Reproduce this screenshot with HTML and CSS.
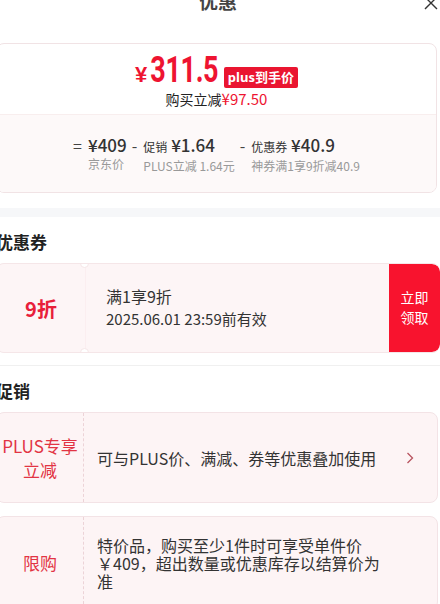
FILE: index.html
```html
<!DOCTYPE html>
<html>
<head>
<meta charset="utf-8">
<title>优惠</title>
<link rel="stylesheet" href="styles.css">
</head>
<body>

<div class="page">
  <div class="header">
    <span></span>
    <h1 class="title">优惠</h1>
    <span class="close">
      <svg width="14" height="14" viewBox="0 0 14 14"><path d="M1 1 L13 13 M13 1 L1 13" stroke="#333" stroke-width="1.4" fill="none"/></svg>
    </span>
  </div>

  <div class="price-card">
    <div class="price-main">
      <div class="price-row">
        <span class="yen">¥</span><span class="amount">311.5</span><span class="badge">plus到手价</span>
      </div>
      <div class="price-save">购买立减<em>¥97.50</em></div>
    </div>
    <div class="breakdown">
      <div class="calc-item">
        <span class="op">=</span>
        <div class="calc-body">
          <div class="calc-value">¥409</div>
          <div class="calc-label">京东价</div>
        </div>
      </div>
      <div class="calc-item">
        <span class="op">-</span>
        <div class="calc-body">
          <div class="calc-value"><small>促销</small> ¥1.64</div>
          <div class="calc-label">PLUS立减 1.64元</div>
        </div>
      </div>
      <div class="calc-item">
        <span class="op">-</span>
        <div class="calc-body">
          <div class="calc-value"><small>优惠券</small> ¥40.9</div>
          <div class="calc-label">神券满1享9折减40.9</div>
        </div>
      </div>
    </div>
  </div>

  <div class="band"></div>

  <h2 class="section-title">优惠券</h2>
  <div class="coupon">
    <div class="coupon-left">9折</div>
    <div class="coupon-info">
      <div class="coupon-name">满1享9折</div>
      <div class="coupon-date">2025.06.01 23:59前有效</div>
    </div>
    <div class="coupon-btn">立即<br>领取</div>
  </div>

  <div class="rule"></div>

  <h2 class="section-title">促销</h2>
  <div class="promo">
    <div class="promo-tag">PLUS专享<br>立减</div>
    <div class="promo-text">可与PLUS价、满减、券等优惠叠加使用</div>
    <div class="promo-arrow">
      <svg width="8" height="12" viewBox="0 0 8 12"><path d="M1.5 1 L6.5 6 L1.5 11" stroke="#b8535f" stroke-width="1.3" fill="none"/></svg>
    </div>
  </div>
  <div class="promo">
    <div class="promo-tag">限购</div>
    <div class="promo-text">特价品，购买至少1件时可享受单件价￥409，超出数量或优惠库存以结算价为准</div>
    <div class="promo-arrow"></div>
  </div>
</div>

</body>
</html>
```

FILE: styles.css
```css
body {
  margin: 0;
  background-color: white;
  font-family: "Noto Sans CJK SC", "Noto Sans", sans-serif;
  color: #333;
  overflow: hidden;
}

.page {
  width: 444px;
  margin-left: -4px;
}

.header {
  display: grid;
  grid-template-columns: 1fr auto 1fr;
  align-items: center;
  align-content: start;
  margin-top: -11px;
  height: 54px;
}

.title {
  margin: 0;
  font-size: 19px;
  line-height: 24px;
  font-weight: bold;
  color: #444;
}

.close {
  justify-self: end;
  margin-right: 2px;
  margin-top: 4px;
  display: flex;
}

.price-card {
  margin-right: 3px;
  border: 1px solid #f1e3e5;
  border-radius: 8px;
  overflow: hidden;
}

.price-main {
  height: 70px;
  padding-top: 8px;
  box-sizing: border-box;
  text-align: center;
}

.price-row {
  display: flex;
  justify-content: center;
  align-items: baseline;
  height: 36px;
  color: #ee1431;
}

.yen {
  font-family: "Liberation Sans", sans-serif;
  font-size: 22px;
  font-weight: bold;
  margin-right: 3px;
}

.amount {
  display: inline-block;
  font-family: "Roboto", sans-serif;
  font-size: 36px;
  line-height: 36px;
  font-weight: bold;
  letter-spacing: -0.5px;
  transform: scaleX(0.75);
  margin: 0 -11px;
}

.badge {
  margin-left: 5px;
  background-color: #ea1530;
  color: white;
  font-family: "Noto Sans", "Noto Sans CJK SC", sans-serif;
  font-size: 13px;
  font-weight: bold;
  line-height: 21px;
  padding: 0 4px;
  border-radius: 2px;
}

.price-save {
  font-size: 14px;
  line-height: 22px;
  color: #222;
}

.price-save em {
  font-style: normal;
  font-size: 15px;
  color: #ee1431;
}

.breakdown {
  height: 78px;
  box-sizing: border-box;
  padding-top: 19px;
  background-color: #fdf9f9;
  border-top: 1px solid #f8eeee;
  display: flex;
  justify-content: center;
  gap: 5px;
}

.calc-item {
  display: flex;
  align-items: flex-start;
}

.op {
  font-size: 16px;
  line-height: 22px;
  color: #444;
  margin-right: 6px;
}

.calc-value {
  font-size: 17px;
  line-height: 22px;
  font-weight: 500;
  color: #333;
  white-space: nowrap;
}

.calc-value small {
  font-size: 12px;
  font-weight: normal;
}

.calc-label {
  font-size: 12px;
  line-height: 16px;
  color: #999;
  white-space: nowrap;
}

.band {
  margin-top: 15px;
  height: 9px;
  background-color: #f6f7f9;
}

.section-title {
  margin: 0;
  padding: 13px 0 9px 0;
  font-size: 17px;
  line-height: 24px;
  font-weight: bold;
  color: #222;
}

.coupon {
  display: grid;
  grid-template-columns: 89px 1fr 51px;
  height: 90px;
  box-sizing: border-box;
  border: 1px solid #f5e6e8;
  border-right: none;
  border-radius: 8px;
  background-color: #fdf5f6;
  overflow: hidden;
}

.coupon-left {
  position: relative;
  display: flex;
  align-items: center;
  justify-content: center;
  font-size: 20px;
  font-weight: bold;
  color: #e8203a;
  border-right: 1px solid #fbeef0;
}

.coupon-left::before,
.coupon-left::after {
  content: "";
  position: absolute;
  right: -4px;
  width: 7px;
  height: 7px;
  border-radius: 50%;
  background-color: white;
  border: 1px solid #f5e6e8;
}

.coupon-left::before {
  top: -5px;
}

.coupon-left::after {
  bottom: -5px;
}

.coupon-info {
  display: flex;
  flex-direction: column;
  justify-content: center;
  padding-left: 20px;
  padding-bottom: 2px;
}

.coupon-name {
  font-size: 16px;
  line-height: 24px;
  color: #333;
}

.coupon-date {
  font-size: 15px;
  line-height: 22px;
  color: #333;
}

.coupon-btn {
  background-color: #f8132e;
  color: white;
  font-size: 14px;
  line-height: 20px;
  display: flex;
  align-items: center;
  justify-content: center;
  text-align: center;
  border-radius: 0 8px 8px 0;
  padding-bottom: 2px;
}

.rule {
  margin-top: 12px;
  height: 1px;
  background-color: #f0f0f0;
}

.promo {
  display: grid;
  grid-template-columns: 87px 1fr 36px;
  margin-right: 2px;
  margin-bottom: 13px;
  min-height: 91px;
  box-sizing: border-box;
  border: 1px solid #f3e3e6;
  border-radius: 8px;
  background-color: #fdf4f5;
}

.promo-tag {
  display: flex;
  align-items: center;
  justify-content: center;
  text-align: center;
  font-size: 17px;
  line-height: 24px;
  color: #e23444;
  border-right: 1px dashed #ecd3d7;
}

.promo-text {
  display: flex;
  align-items: center;
  padding: 19px 14px 19px 13px;
  font-size: 16px;
  line-height: 18px;
  color: #333;
}

.promo-arrow {
  display: flex;
  align-items: center;
  justify-content: flex-start;
  padding-left: 5px;
}
```
